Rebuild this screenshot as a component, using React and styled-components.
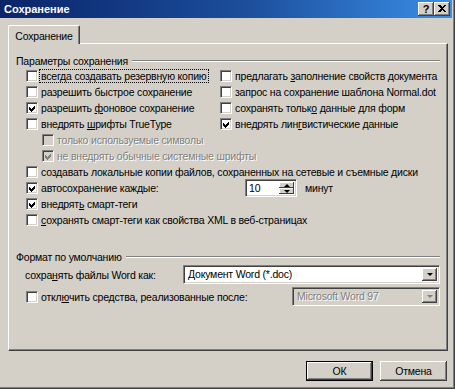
import React from 'react';
import styled, { createGlobalStyle } from 'styled-components';

const FACE = '#d4d0c8';

const Global = createGlobalStyle`
  html, body { margin: 0; padding: 0; background: ${FACE}; }
  body {
    font-family: "Liberation Sans", Arial, sans-serif;
    font-size: 10.5px;
    letter-spacing: -0.2px;
    color: #000;
  }
  * { box-sizing: border-box; }
`;

const Window = styled.div`
  width: 455px;
  height: 389px;
  background: ${FACE};
  padding: 0 3px 3px 0;
  box-shadow: inset -1px -1px 0 #404040, inset -2px -2px 0 #808080;
  display: flex;
  flex-direction: column;
  overflow: hidden;
`;

const TitleBar = styled.div`
  height: 18px;
  flex: none;
  display: flex;
  align-items: center;
  padding: 0 2px 0 4px;
  background: linear-gradient(to right, #0a246a 0%, #1c4f9c 55%, #3a8ee6 100%);
  color: #fff;
  font-weight: bold;
  font-size: 11px;
  letter-spacing: 0;
`;

const Title = styled.span`
  flex: 1;
`;

const CaptionButton = styled.span`
  width: 16px;
  height: 14px;
  background: ${FACE};
  box-shadow: inset -1px -1px 0 #404040, inset 1px 1px 0 #fff, inset -2px -2px 0 #808080;
  display: flex;
  align-items: center;
  justify-content: center;
  font: bold 11px "Liberation Sans", Arial, sans-serif;
  color: #000;
  padding-bottom: 1px;
`;

const Body = styled.div`
  flex: 1;
  display: flex;
  flex-direction: column;
  padding: 7px 4px 0 8px;
`;

const TabStrip = styled.div`
  display: flex;
  height: 18px;
  flex: none;
`;

const Tab = styled.div`
  position: relative;
  z-index: 1;
  width: 72px;
  height: 19px;
  background: ${FACE};
  border-left: 1px solid #fff;
  border-top: 1px solid #fff;
  border-right: 1px solid #404040;
  border-radius: 2px 2px 0 0;
  box-shadow: inset -1px 0 0 #808080;
  display: flex;
  align-items: center;
  justify-content: center;
  padding-top: 2px;
`;

const Panel = styled.div`
  width: 440px;
  height: 308px;
  flex: none;
  border-top: 1px solid #fff;
  border-left: 1px solid #fff;
  border-right: 1px solid #404040;
  border-bottom: 1px solid #404040;
  box-shadow: inset -1px -1px 0 #808080;
  padding: 10px 7px 0 7px;
  display: flex;
  flex-direction: column;
`;

const GroupHeader = styled.div`
  display: flex;
  align-items: center;
  height: 13px;
  gap: 4px;
  margin-top: ${p => p.$top || 0}px;
`;

const EtchedLine = styled.div`
  flex: 1;
  height: 2px;
  border-top: 1px solid #808080;
  border-bottom: 1px solid #fff;
`;

const Options = styled.div`
  margin-top: 1px;
  padding-left: 10px;
  display: flex;
  flex-direction: column;
`;

const TwoCols = styled.div`
  display: grid;
  grid-template-columns: 194px 1fr;
`;

const Row = styled.div`
  display: flex;
  align-items: center;
  height: ${p => p.$h || 16}px;
  padding-left: ${p => p.$indent || 0}px;
  margin-top: ${p => p.$top || 0}px;
  white-space: nowrap;
`;

const Box = styled.span`
  width: 12px;
  height: 12px;
  flex: none;
  background: ${p => (p.$disabled ? FACE : '#fff')};
  border-top: 1px solid #808080;
  border-left: 1px solid #808080;
  border-right: 1px solid #fff;
  border-bottom: 1px solid #fff;
  box-shadow: inset 1px 1px 0 #404040, inset -1px -1px 0 ${FACE};
  display: flex;
  align-items: center;
  justify-content: center;
`;

const Label = styled.span`
  margin-left: 1px;
  padding: 0 1px;
  line-height: 12px;
  border: 1px dotted ${p => (p.$focus ? '#000' : 'transparent')};
  color: ${p => (p.$disabled ? '#808080' : '#000')};
  text-shadow: ${p => (p.$disabled ? '1px 1px 0 #fff' : 'none')};
`;

const PlainLabel = styled.span`
  width: ${p => p.$w}px;
  flex: none;
  padding-left: ${p => p.$pad || 0}px;
`;

const U = styled.span`
  text-decoration: underline;
`;

const LabelCell = styled.div`
  width: 219px;
  flex: none;
  display: flex;
  align-items: center;
`;

const Spinner = styled.div`
  width: 52px;
  height: 18px;
  margin: -1px 0;
  display: flex;
  background: #fff;
  border-top: 1px solid #808080;
  border-left: 1px solid #808080;
  border-right: 1px solid #fff;
  border-bottom: 1px solid #fff;
  box-shadow: inset 1px 1px 0 #404040, inset -1px -1px 0 ${FACE};
  padding: 2px 2px 2px 3px;
`;

const SpinValue = styled.span`
  flex: 1;
  line-height: 12px;
`;

const SpinButtons = styled.div`
  width: 15px;
  display: flex;
  flex-direction: column;
`;

const SpinButton = styled.span`
  flex: 1;
  background: ${FACE};
  box-shadow: inset -1px -1px 0 #404040, inset 1px 1px 0 #fff;
  display: flex;
  align-items: center;
  justify-content: center;
`;

const Arrow = styled.span`
  width: 0;
  height: 0;
  border-left: ${p => p.$size || 3}px solid transparent;
  border-right: ${p => p.$size || 3}px solid transparent;
  ${p => (p.$up ? 'border-bottom' : 'border-top')}: ${p => p.$size || 3}px solid ${p => (p.$disabled ? '#808080' : '#000')};
`;

const Unit = styled.span`
  margin-left: 8px;
`;

const Combo = styled.div`
  width: ${p => p.$w}px;
  height: 19px;
  flex: none;
  margin-left: auto;
  display: flex;
  align-items: stretch;
  background: ${p => (p.$disabled ? FACE : '#fff')};
  border-top: 1px solid #808080;
  border-left: 1px solid #808080;
  border-right: 1px solid #fff;
  border-bottom: 1px solid #fff;
  box-shadow: inset 1px 1px 0 #404040, inset -1px -1px 0 ${FACE};
  padding: 2px;
`;

const ComboText = styled.span`
  flex: 1;
  padding-left: 2px;
  line-height: 13px;
  color: ${p => (p.$disabled ? '#808080' : '#000')};
  text-shadow: ${p => (p.$disabled ? '1px 1px 0 #fff' : 'none')};
`;

const DropButton = styled.span`
  width: 15px;
  background: ${FACE};
  box-shadow: inset -1px -1px 0 #404040, inset 1px 1px 0 #fff, inset -2px -2px 0 #808080;
  display: flex;
  align-items: center;
  justify-content: center;
  padding-bottom: 1px;
`;

const ButtonRow = styled.div`
  display: flex;
  justify-content: flex-end;
  gap: 7px;
  margin-top: 10px;
  padding-right: 1px;
`;

const Button = styled.span`
  width: 67px;
  height: 20px;
  display: flex;
  align-items: center;
  justify-content: center;
  background: ${FACE};
  box-shadow: ${p =>
    p.$default
      ? 'inset 0 0 0 1px #000, inset -2px -2px 0 #404040, inset 2px 2px 0 #fff, inset -3px -3px 0 #808080'
      : 'inset -1px -1px 0 #404040, inset 1px 1px 0 #fff, inset -2px -2px 0 #808080'};
`;

const Check = ({ color }) => (
  <svg width="7" height="7" viewBox="0 0 7 7" shapeRendering="crispEdges">
    <polygon points="0,2 2,4 6,0 6,3 2,7 0,5" fill={color} />
  </svg>
);

const CheckBox = ({ checked, disabled, focus, indent, children }) => (
  <Row $indent={indent}>
    <Box $disabled={disabled}>{checked && <Check color={disabled ? '#808080' : '#000'} />}</Box>
    <Label $disabled={disabled} $focus={focus}>{children}</Label>
  </Row>
);

const CloseGlyph = () => (
  <svg width="8" height="7" viewBox="0 0 8 7" shapeRendering="crispEdges">
    <path d="M0 0h2l2 2 2-2h2L5 3.5 8 7H6L4 5 2 7H0l3-3.5z" fill="#000" />
  </svg>
);

export default function App() {
  return (
    <>
      <Global />
      <Window>
        <TitleBar>
          <Title>Сохранение</Title>
          <CaptionButton>?</CaptionButton>
          <CaptionButton><CloseGlyph /></CaptionButton>
        </TitleBar>
        <Body>
          <TabStrip>
            <Tab>Сохранение</Tab>
          </TabStrip>
          <Panel>
            <GroupHeader>
              <span>Параметры сохранения</span>
              <EtchedLine />
            </GroupHeader>
            <Options>
              <TwoCols>
                <CheckBox focus>всегда создавать резервную копию</CheckBox>
                <CheckBox>предлагать <U>з</U>аполнение свойств документа</CheckBox>
                <CheckBox>разрешить быстрое сохранение</CheckBox>
                <CheckBox>запрос на сохранение шаблона Normal.dot</CheckBox>
                <CheckBox checked>разрешить <U>ф</U>оновое сохранение</CheckBox>
                <CheckBox>сохранять тольк<U>о</U> данные для форм</CheckBox>
                <CheckBox>внедрять <U>ш</U>рифты TrueType</CheckBox>
                <CheckBox checked>внедрять лин<U>г</U>вистические данные</CheckBox>
              </TwoCols>
              <CheckBox disabled indent={16}>только используемые символы</CheckBox>
              <CheckBox disabled checked indent={16}>не внедрять обычные системные шрифты</CheckBox>
              <CheckBox>создавать локальные копии файлов, сохраненных на сетевые и съемные диски</CheckBox>
              <Row>
                <LabelCell>
                  <Box><Check color="#000" /></Box>
                  <Label>автосохранение каждые:</Label>
                </LabelCell>
                <Spinner>
                  <SpinValue>10</SpinValue>
                  <SpinButtons>
                    <SpinButton><Arrow $up $size={3} /></SpinButton>
                    <SpinButton><Arrow $size={3} /></SpinButton>
                  </SpinButtons>
                </Spinner>
                <Unit>минут</Unit>
              </Row>
              <CheckBox checked>внедрят<U>ь</U> смарт-теги</CheckBox>
              <CheckBox><U>с</U>охранять смарт-теги как свойства XML в веб-страницах</CheckBox>
            </Options>
            <GroupHeader $top={22}>
              <span>Формат по умолчанию</span>
              <EtchedLine />
            </GroupHeader>
            <Row $h={19} $top={2}>
              <PlainLabel $w={167} $pad={9}>сохра<U>н</U>ять файлы Word как:</PlainLabel>
              <Combo $w={257}>
                <ComboText>Документ Word (*.doc)</ComboText>
                <DropButton><Arrow $size={3} /></DropButton>
              </Combo>
            </Row>
            <Row $h={19} $top={3} $indent={10}>
              <Box />
              <Label>откл<U>ю</U>чить средства, реализованные после:</Label>
              <Combo $w={148} $disabled>
                <ComboText $disabled>Microsoft Word 97</ComboText>
                <DropButton><Arrow $size={3} $disabled /></DropButton>
              </Combo>
            </Row>
          </Panel>
          <ButtonRow>
            <Button $default>ОК</Button>
            <Button>Отмена</Button>
          </ButtonRow>
        </Body>
      </Window>
    </>
  );
}
